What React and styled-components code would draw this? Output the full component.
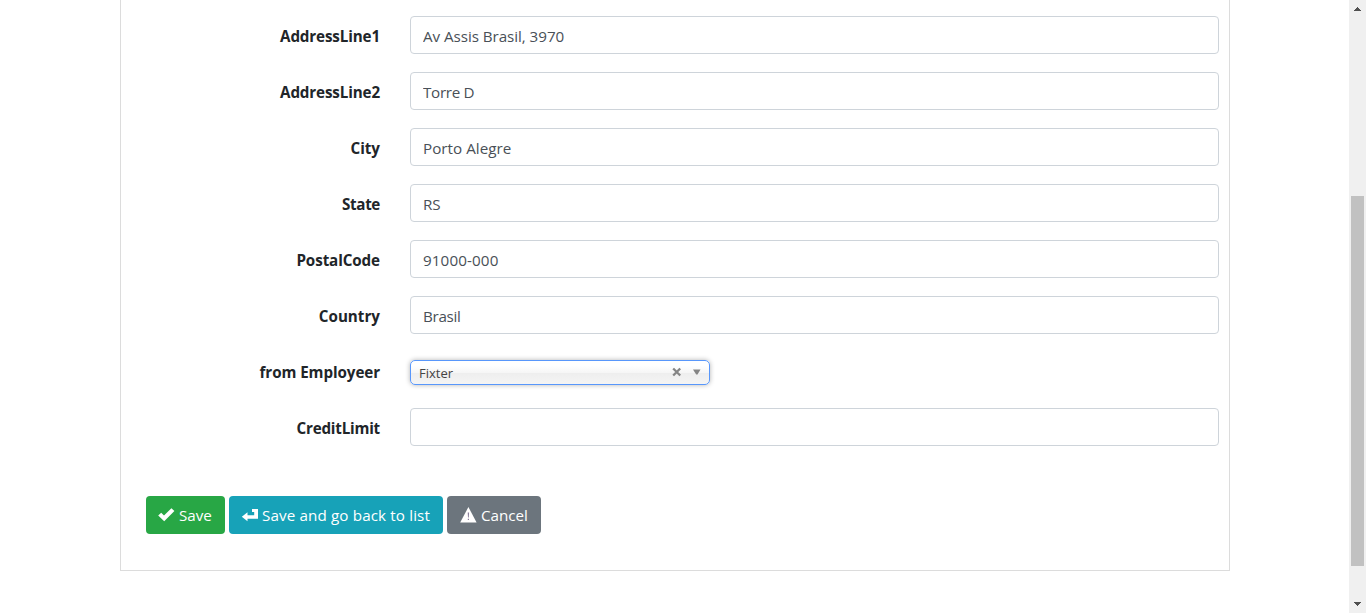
import React from "react";
import styled, { createGlobalStyle } from "styled-components";

const Global = createGlobalStyle`
  *, *::before, *::after { box-sizing: border-box; }
  html, body { margin: 0; overflow: hidden; background: #fff; }
  body {
    font-family: "Open Sans", "Noto Sans", sans-serif;
    font-size: 15.2px;
    line-height: 24px;
    color: #212529;
  }
`;

const Page = styled.div`
  display: flex;
  height: 613px;
`;

const Content = styled.main`
  flex: 1;
  padding-left: 120px;
`;

const Panel = styled.form`
  width: 1110px;
  height: 571px;
  margin: 0;
  padding: 16px 10px 0 25px;
  border: 1px solid #dcdcdc;
  border-top: 0;
`;

const Fields = styled.div`
  display: flex;
  flex-direction: column;
  gap: 18px;
`;

const Row = styled.div`
  display: grid;
  grid-template-columns: 234px 809px;
  column-gap: 30px;
  height: 38px;
  align-items: center;
`;

const Label = styled.label`
  text-align: right;
  font-weight: 700;
  white-space: nowrap;
  padding-top: 1px;
  letter-spacing: ${(p) => p.$spacing || 0}px;
`;

const Input = styled.input`
  width: 100%;
  height: 38px;
  padding: 1px 12px 0;
  border: 1px solid #ced4da;
  border-radius: 4px;
  background: #fff;
  color: #495057;
  font: inherit;
  letter-spacing: ${(p) => p.$spacing || 0}px;
  outline: 0;
`;

const Select = styled.div`
  display: flex;
  align-items: center;
  align-self: start;
  width: 300px;
  height: 25px;
  margin-top: 8px;
  padding: 0 8px;
  border: 1px solid #5897fb;
  border-radius: 5px;
  background: linear-gradient(#fff 20%, #f6f6f6 50%, #eee 52%, #f4f4f4 100%) padding-box;
  box-shadow: 0 0 5px rgba(0, 0, 0, 0.3);
  color: #444;
  font-size: 13px;
`;

const SelectValue = styled.span`
  flex: 1;
  padding-top: 1px;
`;

const ClearIcon = styled.svg`
  width: 10px;
  height: 10px;
  margin: 0 11px 1px 0;
`;

const CaretIcon = styled.svg`
  width: 8px;
  height: 6px;
  margin-bottom: 1px;
`;

const Actions = styled.div`
  display: flex;
  gap: 4px;
  margin-top: 50px;
`;

const Button = styled.button`
  display: flex;
  align-items: center;
  width: ${(p) => p.$width}px;
  height: 38px;
  padding: 0 0 0 12px;
  border: 0;
  border-radius: 4px;
  background: ${(p) => p.$color};
  color: #fff;
  font: inherit;
  white-space: nowrap;
  letter-spacing: ${(p) => p.$spacing || 0}px;

  svg {
    flex: none;
    margin-right: 4px;
  }
`;

const Scrollbar = styled.div`
  display: flex;
  flex-direction: column;
  align-items: center;
  width: 17px;
  background: #f0f0f0;
`;

const Arrow = styled.svg`
  width: 17px;
  height: 17px;
  fill: #505050;
`;

const Thumb = styled.div`
  width: 13px;
  height: 370px;
  margin: 179px 0 30px;
  background: #c1c1c1;
`;

const textFields = [
  ["AddressLine1", "Av Assis Brasil, 3970", -0.13, -0.05],
  ["AddressLine2", "Torre D", -0.13, -0.3],
  ["City", "Porto Alegre", 0, 0.03],
  ["State", "RS", -0.35, 0],
  ["PostalCode", "91000-000", -0.1, 0.12],
  ["Country", "Brasil", 0, -0.3],
];

function Field({ label, value, labelSpacing, valueSpacing }) {
  return (
    <Row>
      <Label $spacing={labelSpacing}>{label}</Label>
      <Input defaultValue={value} aria-label={label} $spacing={valueSpacing} />
    </Row>
  );
}

export default function App() {
  return (
    <Page>
      <Global />
      <Content>
        <Panel>
          <Fields>
            {textFields.map(([label, value, labelSpacing, valueSpacing]) => (
              <Field
                key={label}
                label={label}
                value={value}
                labelSpacing={labelSpacing}
                valueSpacing={valueSpacing}
              />
            ))}
            <Row>
              <Label $spacing={-0.08}>from Employeer</Label>
              <Select>
                <SelectValue>Fixter</SelectValue>
                <ClearIcon viewBox="0 0 10 10">
                  <path d="M1.2 1.5L8.2 8.5M8.2 1.5L1.2 8.5" stroke="#858585" strokeWidth="2.3" />
                </ClearIcon>
                <CaretIcon viewBox="0 0 8 6">
                  <path d="M0 .5H7.5L4.5 5.5H3.2Z" fill="#858585" />
                </CaretIcon>
              </Select>
            </Row>
            <Field label="CreditLimit" value="" labelSpacing={-0.2} />
          </Fields>
          <Actions>
            <Button type="button" $width={79} $color="#28a745">
              <svg width="17" height="16" viewBox="0 0 17 16">
                <path d="M.2 8.6L3.2 5.8L6 8.6L13.4 1.2L16.4 3.9L6.2 14.2Z" fill="#fff" />
              </svg>
              Save
            </Button>
            <Button type="button" $width={214} $color="#17a2b8" $spacing={0.13}>
              <svg width="17" height="16" viewBox="0 0 17 16">
                <path d="M17 2H11V5H13.2V8.3H6.5V5.2L.8 9.8L6.5 14.2V11.7H17Z" fill="#fff" />
              </svg>
              Save and go back to list
            </Button>
            <Button type="button" $width={94} $color="#6c757d">
              <svg width="18" height="16" viewBox="0 0 18 16">
                <path d="M9.4 0L17.6 15.6H1.2Z" fill="#fff" />
                <path d="M8.7 5.5H10.1L9.8 10.5H9ZM8.8 11.7H10V13H8.8Z" fill="#8a7f9c" />
              </svg>
              Cancel
            </Button>
          </Actions>
        </Panel>
      </Content>
      <Scrollbar>
        <Arrow viewBox="0 0 17 17" shapeRendering="crispEdges">
          <path d="M5 11H12V10H11V9H10V8H9V7H8V8H7V9H6V10H5Z" />
        </Arrow>
        <Thumb />
        <Arrow viewBox="0 0 17 17" shapeRendering="crispEdges">
          <path d="M5 6H12V7H11V8H10V9H9V10H8V9H7V8H6V7H5Z" />
        </Arrow>
      </Scrollbar>
    </Page>
  );
}
